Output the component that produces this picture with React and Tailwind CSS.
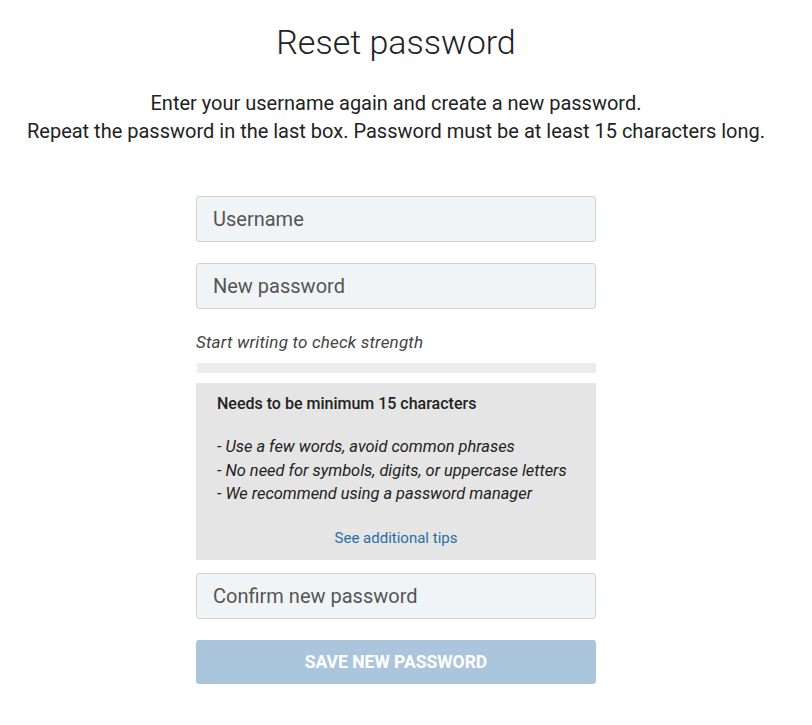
export default function App() {
  return (
    <div className="min-h-[725px] bg-white text-[#222] font-['Roboto',sans-serif]">
      <div className="flex w-[792px] flex-col items-center pt-[20px]">
        <h1 className="text-[34px] font-light leading-[44px] text-[#222]">Reset password</h1>
        <p className="mt-[25px] text-center text-[20px] leading-[28px] text-[#222]">
          Enter your username again and create a new password.
          <br />
          Repeat the password in the last box. Password must be at least 15 characters long.
        </p>

        <form className="mt-[51px] flex w-[400px] flex-col" onSubmit={(e) => e.preventDefault()}>
          <input
            type="text"
            placeholder="Username"
            className="h-[46px] w-full rounded-[3px] border border-[#cfd2d4] bg-[#f1f4f7] px-[16px] text-[20px] placeholder:text-[#555] outline-none"
          />
          <input
            type="password"
            placeholder="New password"
            className="mt-[21px] h-[46px] w-full rounded-[3px] border border-[#cfd2d4] bg-[#f1f4f7] px-[16px] text-[20px] placeholder:text-[#555] outline-none"
          />

          <div className="mt-[22px] text-[17px] italic leading-[22px] tracking-[0.2px] text-[#444]">
            Start writing to check strength
          </div>

          <div className="mt-[10px] flex h-[10px] w-full bg-[#e9ecef]">
            <div className="h-full w-[2px] bg-[#f3f4f6]" />
          </div>

          <div className="mt-[10px] bg-[#e5e5e5] px-[21px] pt-[10px] pb-[12px] text-[#222]">
            <div className="text-[16px] font-medium leading-[22px]">Needs to be minimum 15 characters</div>
            <ul className="mt-[20px] text-[16.4px] italic leading-[23.5px]">
              <li>- Use a few words, avoid common phrases</li>
              <li>- No need for symbols, digits, or uppercase letters</li>
              <li>- We recommend using a password manager</li>
            </ul>
            <div className="mt-[22.5px] text-center leading-[20px]">
              <a href="#" className="text-[15px] leading-[20px] text-[#2b6ea6]">See additional tips</a>
            </div>
          </div>

          <input
            type="password"
            placeholder="Confirm new password"
            className="mt-[13px] h-[46px] w-full rounded-[3px] border border-[#cfd2d4] bg-[#f1f4f7] px-[16px] text-[20px] placeholder:text-[#555] outline-none"
          />

          <button
            type="submit"
            disabled
            className="mt-[21px] h-[44px] w-full rounded-[3px] bg-[#abc6dc] text-[17.5px] font-bold uppercase text-white"
          >
            Save new password
          </button>
        </form>
      </div>
    </div>
  )
}
